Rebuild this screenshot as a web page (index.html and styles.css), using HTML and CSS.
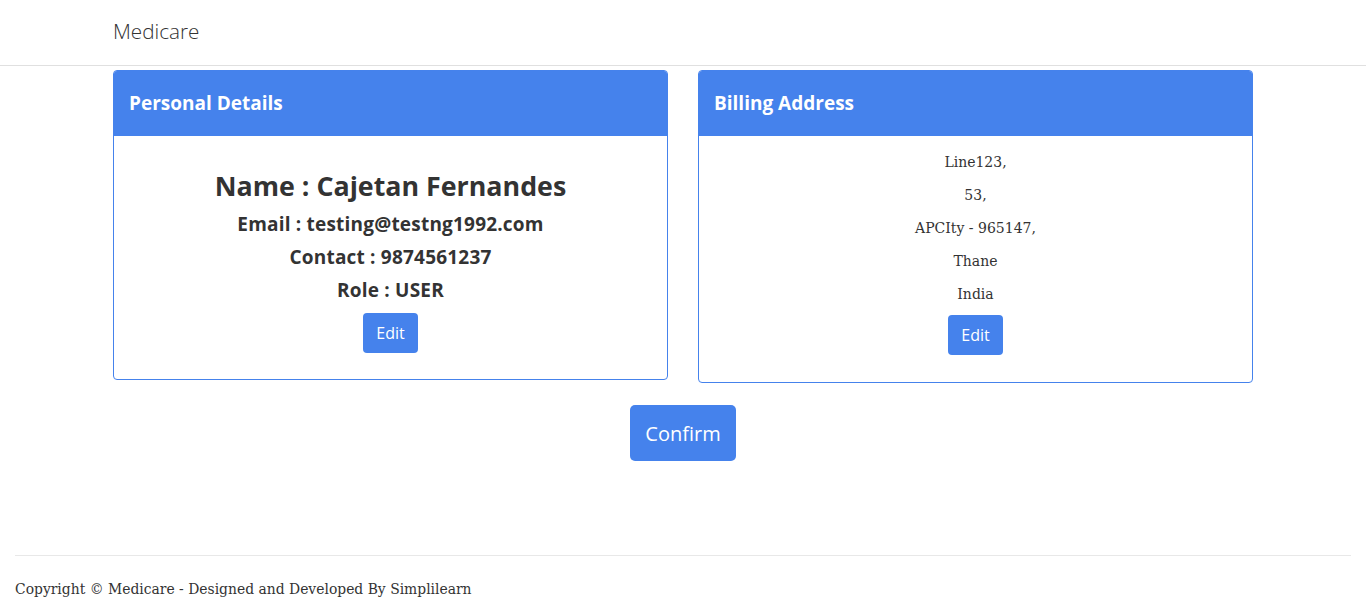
FILE: index.html
```html
<!DOCTYPE html>
<html>
<head>
<meta charset="utf-8">
<link rel="stylesheet" href="styles.css">
</head>
<body>
<nav class="navbar">
  <div class="container"><span class="brand">Medicare</span></div>
</nav>
<main class="container">
  <div class="row">
    <section class="card">
      <div class="card-header">Personal Details</div>
      <div class="card-body personal">
        <h3 class="name">Name : Cajetan Fernandes</h3>
        <h5 class="info">Email : testing@testng1992.com</h5>
        <h5 class="info">Contact : 9874561237</h5>
        <h5 class="info">Role : USER</h5>
        <button class="btn">Edit</button>
      </div>
    </section>
    <section class="card">
      <div class="card-header">Billing Address</div>
      <div class="card-body billing">
        <p class="line">Line123,</p>
        <p class="line">53,</p>
        <p class="line">APCIty - 965147,</p>
        <p class="line">Thane</p>
        <p class="line">India</p>
        <button class="btn">Edit</button>
      </div>
    </section>
  </div>
  <div class="confirm-row"><button class="btn btn-lg">Confirm</button></div>
</main>
<footer class="footer">
  <hr class="footer-rule">
  <p class="copy">Copyright © Medicare - Designed and Developed By Simplilearn</p>
</footer>
</body>
</html>
```
FILE: styles.css
```css
* { box-sizing: border-box; }
html, body { margin: 0; padding: 0; }
body {
  font-family: "DejaVu Serif", Georgia, serif;
  font-size: 14px;
  color: #333;
  background: #fff;
}
.container {
  width: 1140px;
  margin: 0 auto;
}
.navbar {
  height: 66px;
  border-bottom: 1px solid #e0e0e0;
  display: flex;
  align-items: center;
}
.brand {
  font-family: "Open Sans", sans-serif;
  font-size: 20.7px;
  font-weight: 300;
  color: #333;
  display: block;
  margin-top: -3px;
}
main.container { padding-top: 4px; }
.row {
  display: flex;
  gap: 30px;
  align-items: flex-start;
}
.card {
  flex: 1;
  border: 1px solid #4582ec;
  border-radius: 4px;
  overflow: hidden;
}
.card-header {
  background: #4582ec;
  color: #fff;
  font-family: "Open Sans", sans-serif;
  font-weight: 700;
  font-size: 19px;
  height: 65px;
  padding: 0 15px 2px;
  display: flex;
  align-items: center;
}
.card-body {
  display: flex;
  flex-direction: column;
  align-items: center;
  text-align: center;
}
.personal { padding: 34px 20px 26px; }
.name {
  font-family: "Open Sans", sans-serif;
  font-weight: 700;
  font-size: 26.8px;
  margin: 0 0 11px;
  line-height: 32px;
  color: #333;
}
.info {
  font-family: "Open Sans", sans-serif;
  font-weight: 700;
  font-size: 19px;
  letter-spacing: 0.2px;
  line-height: 23px;
  margin: 0 0 10px;
  color: #333;
}
.billing { padding: 15px 20px 27px; }
.line {
  margin: 0 0 10px;
  line-height: 23px;
  font-size: 14px;
}
.btn {
  font-family: "Open Sans", sans-serif;
  background: #4582ec;
  color: #fff;
  border: none;
  border-radius: 4px;
  font-size: 16px;
  font-weight: 400;
  width: 55px;
  height: 40px;
  padding: 0;
  margin-top: 1px;
  cursor: pointer;
}
.billing .btn { margin-top: -1px; }
.confirm-row {
  display: flex;
  justify-content: center;
  padding-top: 22px;
}
.btn-lg {
  width: 106px;
  height: 56px;
  font-size: 20px;
  border-radius: 5px;
  margin: 0;
}
.footer {
  padding: 0 15px;
  margin-top: 94px;
}
.footer-rule {
  border: none;
  border-top: 1px solid #e8e8e8;
  margin: 0;
}
.copy {
  margin: 25px 0 0;
  font-size: 13.9px;
  color: #333;
}
```
